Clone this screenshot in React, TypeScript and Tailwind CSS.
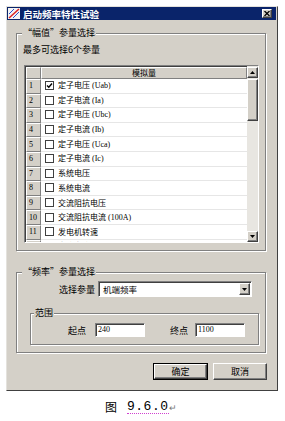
import { ReactNode } from "react";

const font = { fontFamily: '"Noto Sans CJK SC", "Noto Sans", sans-serif' };
const serif = { fontFamily: '"Liberation Serif", serif' };

const rows = [
  { label: "定子电压", sub: "(Uab)", checked: true },
  { label: "定子电流", sub: "(Ia)" },
  { label: "定子电压", sub: "(Ubc)" },
  { label: "定子电流", sub: "(Ib)" },
  { label: "定子电压", sub: "(Uca)" },
  { label: "定子电流", sub: "(Ic)" },
  { label: "系统电压" },
  { label: "系统电流" },
  { label: "交流阻抗电压" },
  { label: "交流阻抗电流", sub: "(100A)" },
  { label: "发电机转速" },
  { label: "直流电流1" },
];

const raised =
  "bg-[#d4d0c8] border border-t-white border-l-white border-r-[#404040] border-b-[#404040] shadow-[inset_-1px_-1px_0_#808080]";

const cell = "bg-[#d4d0c8] border border-t-white border-l-white border-r-[#808080] border-b-[#808080]";

const sunken =
  "bg-white border border-t-[#808080] border-l-[#808080] border-r-white border-b-white shadow-[inset_1px_1px_0_#404040]";

const Group = ({ title, className, children }: { title: string; className: string; children: ReactNode }) => (
  <fieldset className={`border border-[#808080] shadow-[inset_1px_1px_0_white,1px_1px_0_white] ${className}`}>
    <legend className="ml-[5px] px-[1px] bg-[#d4d0c8] text-[9px] leading-[12px] text-black">{title}</legend>
    {children}
  </fieldset>
);

const Arrow = ({ up }: { up?: boolean }) => (
  <svg width="5" height="3" viewBox="0 0 5 3">
    <path d={up ? "M2.5 0 L5 3 L0 3 Z" : "M0 0 L5 0 L2.5 3 Z"} fill="#000" />
  </svg>
);

const Checkbox = ({ checked }: { checked?: boolean }) => (
  <div className="w-[9px] h-[9px] border border-[#404040] bg-white flex items-center justify-center shrink-0">
    {checked && (
      <svg width="7" height="7" viewBox="0 0 7 7">
        <path d="M1 3.5 L2.8 5.3 L6 1.5" stroke="#000" strokeWidth="1.4" fill="none" />
      </svg>
    )}
  </div>
);

const App = () => {
  return (
    <div className="w-[285px] h-[421px] bg-white overflow-hidden pt-[6px] pl-[6px]" style={font}>
      <div className="w-[272px] h-[385px] bg-[#d4d0c8] border border-t-[#e4e2dd] border-l-[#e4e2dd] border-r-[#404040] border-b-[#404040] flex flex-col">
        {/* title bar */}
        <div className="h-[13px] mr-[1px] bg-[#0a246a] flex items-center">
          <svg width="12" height="11" viewBox="0 0 12 11" className="ml-[1px]">
            <rect x="0" y="0" width="12" height="11" fill="#f4f4f4" />
            <path d="M1 10 L11 1" stroke="#d22" strokeWidth="1.5" />
            <path d="M1 6 L6 1 M5 10 L11 4" stroke="#2a4fd0" strokeWidth="1" />
          </svg>
          <span className="ml-[3px] text-white font-bold text-[9.5px] leading-[12px]">启动频率特性试验</span>
          <div className={`ml-auto mr-[4px] w-[10px] h-[9px] flex items-center justify-center ${raised}`}>
            <svg width="6" height="5" viewBox="0 0 6 5">
              <path d="M0.5 0 L5.5 5 M5.5 0 L0.5 5" stroke="#000" strokeWidth="1.3" />
            </svg>
          </div>
        </div>

        {/* amplitude group */}
        <Group title="“幅值”参量选择" className="ml-[9px] mt-[7px] w-[250px] pb-[7px]">
          <p className="ml-[6px] mt-[5px] text-[9px] leading-[12px]">最多可选择6个参量</p>
          <div className={`ml-[7px] mt-[9px] w-[235px] h-[178px] flex overflow-hidden ${sunken}`}>
            <div className="flex-1 flex flex-col overflow-hidden pl-[1px] pt-[1px]">
              <div className="flex h-[12px] shrink-0">
                <div className={`w-[15px] ${cell}`} />
                <div className={`flex-1 flex items-center justify-center text-[8px] leading-none ${cell}`}>模拟量</div>
              </div>
              {rows.map((r, i) => (
                <div key={i} className="flex h-[14.6px] shrink-0">
                  <div className={`w-[15px] flex items-center pl-[2px] text-[8px] leading-none ${cell}`} style={serif}>
                    {i + 1}
                  </div>
                  <div className="flex-1 flex items-center bg-white border-b border-[#e6e6e6] pl-[4px]">
                    <Checkbox checked={r.checked} />
                    <span className="ml-[4px] text-[8px] leading-none whitespace-nowrap">
                      {r.label}
                      {r.sub && (
                        <span className="ml-[2px] text-[8px]" style={serif}>
                          {r.sub}
                        </span>
                      )}
                    </span>
                  </div>
                </div>
              ))}
            </div>
            {/* scrollbar */}
            <div className="w-[11px] bg-[#e8e6e1] flex flex-col pt-[1px]">
              <div className={`h-[11px] flex items-center justify-center ${raised}`}>
                <Arrow up />
              </div>
              <div className={`h-[42px] mt-[1px] ${raised}`} />
              <div className={`mt-auto h-[11px] flex items-center justify-center ${raised}`}>
                <Arrow />
              </div>
            </div>
          </div>
        </Group>

        {/* frequency group */}
        <Group title="“频率”参量选择" className="ml-[9px] mt-[15px] w-[250px] pb-[7px]">
          <div className="mt-[3px] h-[16px] flex items-center">
            <span className="w-[78px] text-right text-[9px] leading-none">选择参量</span>
            <div className={`ml-[3px] w-[154px] h-[16px] flex items-center ${sunken}`}>
              <span className="ml-[4px] text-[8.5px] leading-none">机端频率</span>
              <div className={`ml-auto mr-[1px] w-[11px] h-[12px] flex items-center justify-center ${raised}`}>
                <Arrow />
              </div>
            </div>
          </div>
          <fieldset className="ml-[13px] mt-[10px] w-[229px] pb-[7px] border border-[#808080] shadow-[inset_1px_1px_0_white,1px_1px_0_white]">
            <legend className="ml-[3px] px-[1px] bg-[#d4d0c8] text-[9px] leading-[12px]">范围</legend>
            <div className="mt-[4px] h-[14px] flex items-center">
              <span className="ml-[37px] text-[9px] leading-none">起点</span>
              <div className={`ml-[9px] w-[50px] h-[14px] flex items-center ${sunken}`}>
                <span className="ml-[2px] text-[8px] leading-none" style={serif}>240</span>
              </div>
              <span className="ml-[25px] text-[9px] leading-none">终点</span>
              <div className={`ml-[7px] w-[50px] h-[14px] flex items-center ${sunken}`}>
                <span className="ml-[2px] text-[8px] leading-none" style={serif}>1100</span>
              </div>
            </div>
          </fieldset>
        </Group>

        {/* buttons */}
        <div className="mt-[10px] flex justify-end gap-[5px] pr-[10px]">
          <button className="w-[55px] h-[17px] border border-black">
            <div className={`w-full h-full flex items-center justify-center text-[9px] leading-none ${raised}`}>确定</div>
          </button>
          <button className={`w-[54px] h-[17px] flex items-center justify-center text-[9px] leading-none ${raised}`}>取消</button>
        </div>
      </div>

      {/* caption */}
      <div className="mt-[9px] ml-[99px] flex items-end h-[14px]">
        <span className="text-[12px] leading-[14px]">图</span>
        <span
          className="ml-[10px] text-[13px] leading-[13px] tracking-[0.5px] border-b border-dotted border-[#d040d0]"
          style={{ fontFamily: '"Liberation Mono", monospace' }}
        >
          9.6.0
        </span>
        <span className="text-[9px] leading-[12px] text-[#777]">↵</span>
      </div>
    </div>
  );
};

export default App;
